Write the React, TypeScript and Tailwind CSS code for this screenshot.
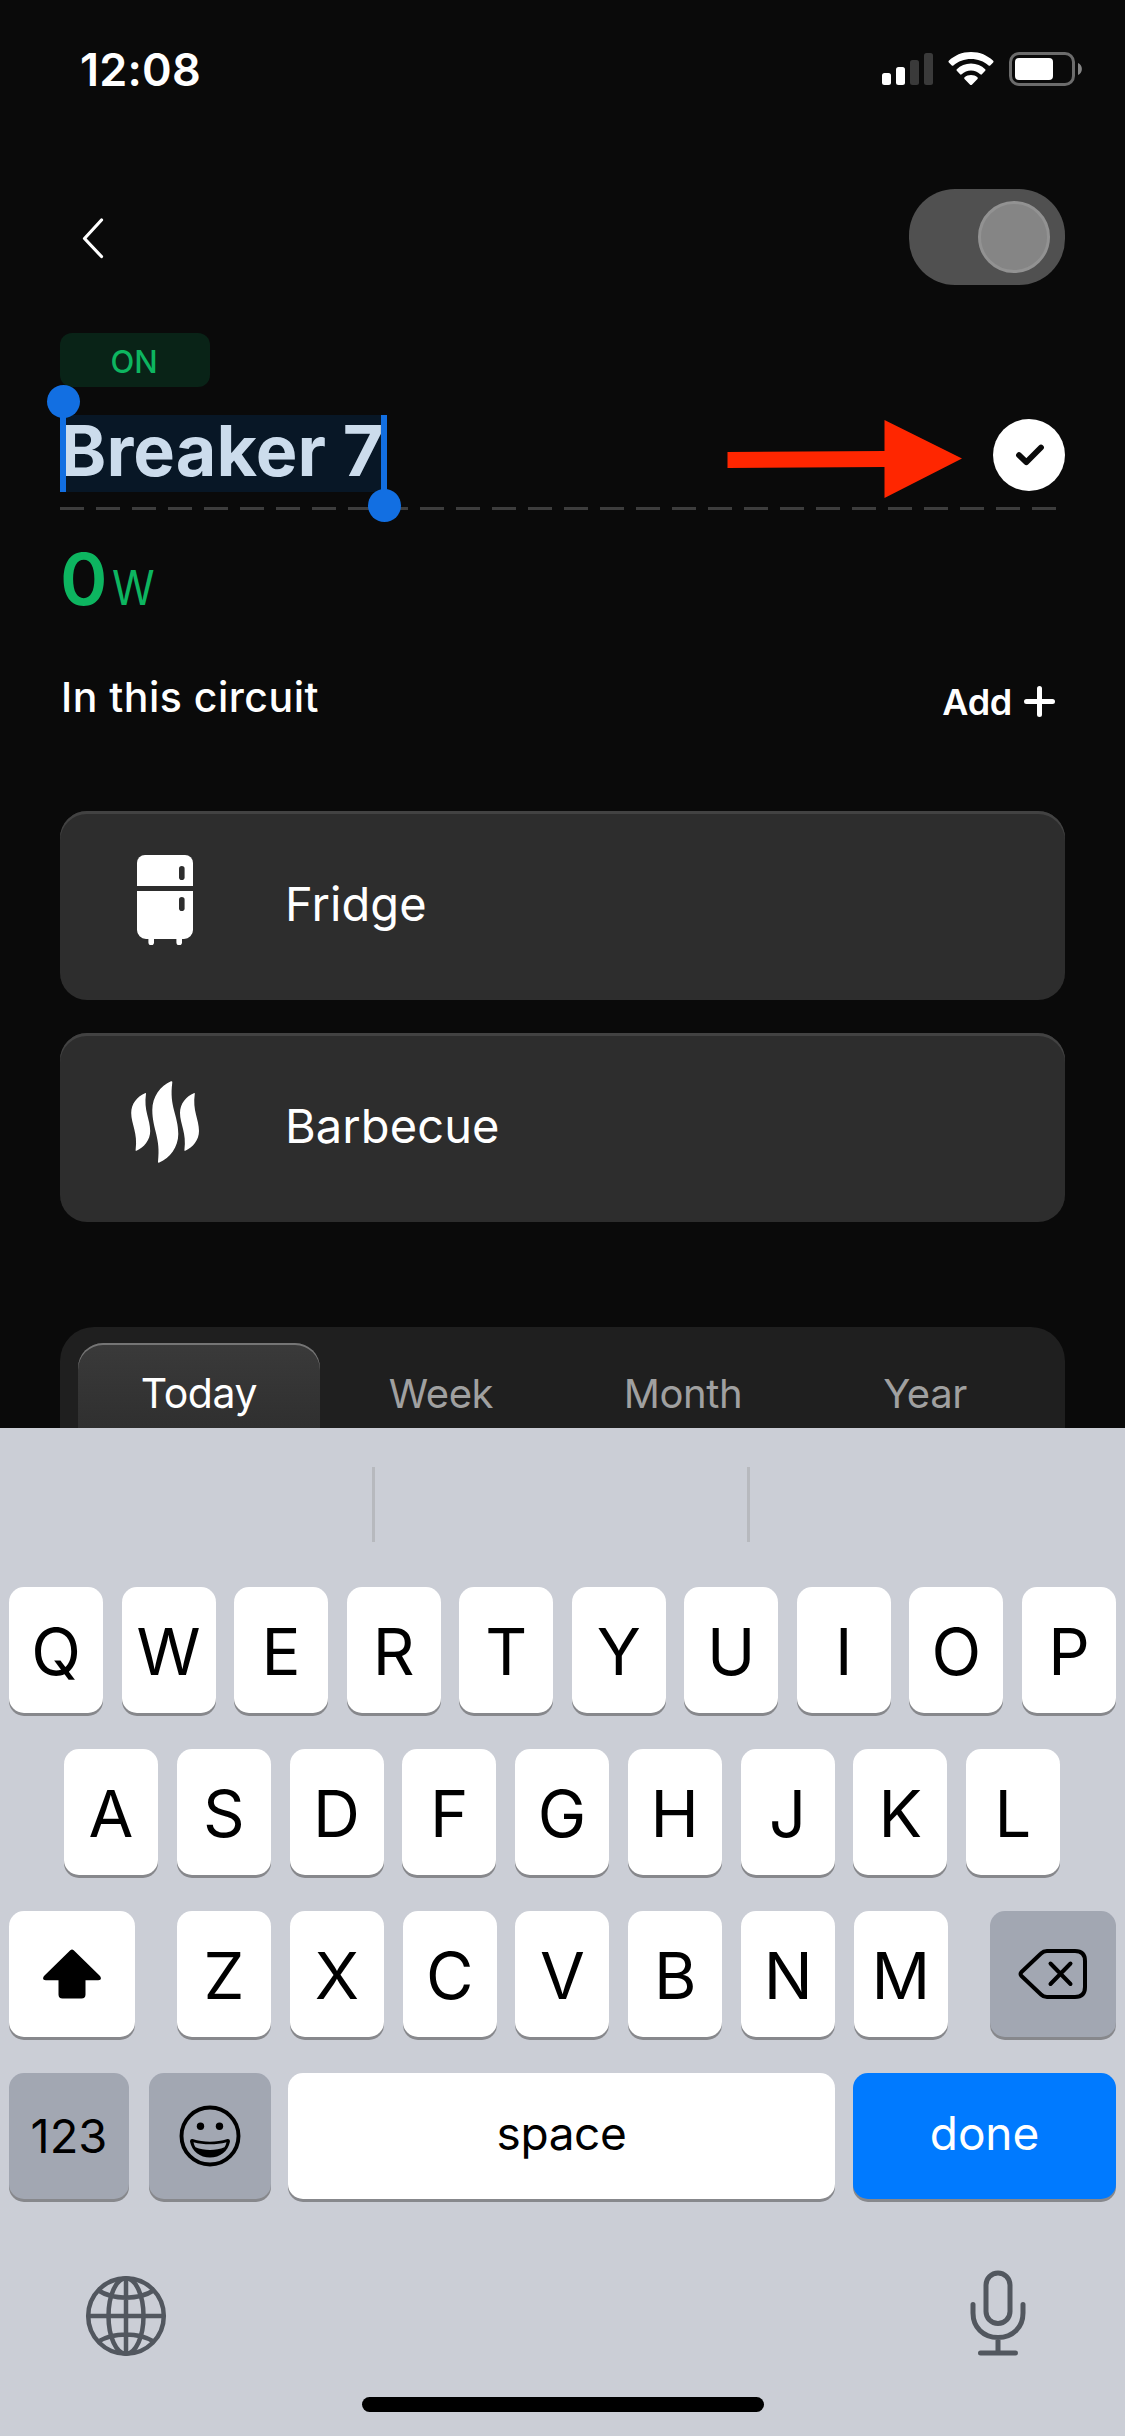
import React from "react";

function SignalIcon() {
  return (
    <svg width="52" height="34" viewBox="0 0 52 34" className="mr-[14px]">
      <rect x="0" y="21" width="9" height="12" rx="2.5" fill="#fff" />
      <rect x="14" y="15" width="9" height="18" rx="2.5" fill="#fff" />
      <rect x="28" y="8" width="9" height="25" rx="2.5" fill="#3a3a3a" />
      <rect x="42" y="1" width="9" height="32" rx="2.5" fill="#3a3a3a" />
    </svg>
  );
}

function WifiIcon() {
  return (
    <svg width="46" height="34" viewBox="0 0 46 34" className="mr-[15px]" fill="#fff">
      <path d="M23 0C32 0 39.6 3.4 45.2 8.8Q46 9.600 45.200 10.400L42.200 13.500Q41.400 14.200 40.600 13.500C35.800 9.300 29.700 7 23 7C16.300 7 10.200 9.300 5.400 13.500Q4.600 14.200 3.800 13.500L.8 10.400Q0 9.600 .8 8.800C6.400 3.400 14 0 23 0Z" />
      <path d="M23 11.500C28.600 11.500 33.500 13.700 37.200 17.200Q38 18 37.200 18.800L33.900 22.300Q33.200 23 32.300 22.300C29.800 20 26.600 18.600 23 18.600C19.400 18.600 16.200 20 13.700 22.300Q12.800 23 12.100 22.300L8.800 18.800Q8 18 8.800 17.200C12.500 13.700 17.400 11.500 23 11.500Z" />
      <path d="M23 23C25.500 23 27.700 23.900 29.400 25.300Q30.300 26.100 29.500 26.900L23.900 32.700Q23 33.500 22.100 32.700L16.500 26.900Q15.700 26.100 16.600 25.300C18.300 23.900 20.500 23 23 23Z" />
    </svg>
  );
}

function BatteryIcon() {
  return (
    <svg width="73" height="34" viewBox="0 0 73 34">
      <rect x="1.500" y="1.500" width="63" height="31" rx="8.500" fill="none" stroke="#6c6c6c" strokeWidth="3" />
      <rect x="6" y="6" width="38" height="22" rx="4" fill="#fff" />
      <path d="M69 11C74.200 13 74.200 21 69 23Z" fill="#858585" />
    </svg>
  );
}

function FridgeIcon() {
  return (
    <svg width="56" height="90" viewBox="0 0 56 90">
      <path d="M8 0H48A8 8 0 0 1 56 8V31H0V8A8 8 0 0 1 8 0Z" fill="#fff" />
      <path d="M0 36H56V75A9 9 0 0 1 47 84H45V87.500A2.800 2.800 0 0 1 39.400 87.500V84H17V87.500A2.800 2.800 0 0 1 11.400 87.500V84H9A9 9 0 0 1 0 75Z" fill="#fff" />
      <rect x="42" y="11" width="5.600" height="14" rx="2.800" fill="#2d2d2d" />
      <rect x="42" y="42" width="5.600" height="14" rx="2.800" fill="#2d2d2d" />
    </svg>
  );
}

function HeatIcon() {
  return (
    <svg width="68" height="82" viewBox="0 0 68 82" fill="#fff">
      <path d="M14.500 12Q15 11.700 15 12.500C12.500 30 19.200 38 19.200 50C19.200 59 13 66.500 5.500 69.700Q4.400 70.200 4.600 69C7 52 .2 43 .2 32C.2 23 6 15.400 14.500 12Z" />
      <path d="M40 .3Q41.500 0 41.300 1.500C38 26 47.300 34 47.300 53C47.300 66 39 77 28.300 81.600Q26.800 82 27 80.500C30 57 21.300 48 21.300 29C21.300 16 29.500 4.500 40 .3Z" />
      <path d="M63.300 12Q63.800 11.700 63.800 12.500C61.300 30 68 38 68 50C68 59 61.800 66.500 54.300 69.700Q53.200 70.200 53.400 69C55.800 52 49 43 49 32C49 23 54.800 15.400 63.300 12Z" />
    </svg>
  );
}

function Appliance({ icon, name }: { icon: React.ReactNode; name: string }) {
  return (
    <div className="flex h-[189px] items-center overflow-hidden rounded-[27px] bg-[#2d2d2d] shadow-[inset_0_3px_0_#424242]">
      <div className="mb-[11px] flex w-[210px] justify-center">{icon}</div>
      <div className="mb-[3px] ml-[15px] text-[47px] leading-[60px] font-normal tracking-[0.1px] text-white">{name}</div>
    </div>
  );
}

function Key({ children, className = "w-[94px] bg-white" }: { children: React.ReactNode; className?: string }) {
  return (
    <div className={"flex h-[126px] shrink-0 items-center justify-center rounded-[15px] shadow-[0_3px_0_#87888c] " + className}>
      {children}
    </div>
  );
}

function Letters({ text }: { text: string }) {
  return (
    <>
      {text.split("").map((c) => (
        <Key key={c}>
          <span className="pt-[3px] text-[65px] leading-none">{c}</span>
        </Key>
      ))}
    </>
  );
}

function Keyboard() {
  return (
    <section className="h-[1008px] bg-[#cbced6] font-normal text-black">
      <div className="flex h-[159px] pt-[39px]">
        <div className="h-[75px] w-[375px] border-r-[3px] border-[#b7b9be]" />
        <div className="h-[75px] w-[375px] border-r-[3px] border-[#b7b9be]" />
      </div>
      <div className="flex flex-col gap-[36px] px-[9px]">
        <div className="flex justify-between">
          <Letters text="QWERTYUIOP" />
        </div>
        <div className="flex justify-between pr-[56px] pl-[55px]">
          <Letters text="ASDFGHJKL" />
        </div>
        <div className="flex justify-between">
          <Key className="w-[126px] bg-white">
            <svg width="58" height="50" viewBox="0 0 58 50">
              <path d="M27.300 1.200Q29 -.4 30.700 1.200L57 27Q58.500 29 57.500 30.500Q57 31.300 55 31.300H42.500V45.500Q42.500 49.500 38.500 49.500H19.500Q15.500 49.500 15.500 45.500V31.300H3Q1 31.300 .5 30.500Q-.5 29 1 27Z" />
            </svg>
          </Key>
          <div className="flex w-[771px] justify-between">
            <Letters text="ZXCVBNM" />
          </div>
          <Key className="w-[126px] bg-[#a2a7b2]">
            <svg width="70" height="52" viewBox="0 0 70 52" fill="none" stroke="#000" strokeWidth="4" strokeLinecap="round" strokeLinejoin="round">
              <path d="M29 3H57Q67 3 67 13V39Q67 49 57 49H29Q25.500 49 23 46.500L3.500 28Q1.500 26 3.500 24L23 5.500Q25.500 3 29 3Z" />
              <path d="M32.500 15.500L52.500 36M52.500 15.500L32.500 36" />
            </svg>
          </Key>
        </div>
        <div className="flex">
          <Key className="w-[120px] bg-[#a2a7b2]">
            <span className="mb-[2px] text-[47px] leading-none">123</span>
          </Key>
          <Key className="ml-[20px] w-[122px] bg-[#a2a7b2]">
            <svg width="62" height="62" viewBox="0 0 62 62">
              <circle cx="31" cy="31" r="28.500" fill="none" stroke="#000" strokeWidth="3.900" />
              <circle cx="21.500" cy="21.300" r="3.700" />
              <circle cx="40.500" cy="21.300" r="3.700" />
              <path d="M13.500 34C25 37.600 37 37.600 48.500 34Q51.200 33.500 51 36.500C49 46.500 41 52.500 31 52.500S13 46.500 11 36.500Q10.800 33.500 13.500 34Z" />
              <path d="M14.500 37.200C25 40 37 40 47.500 37.200C47 39.400 46.300 41 45.500 42.300C37 45.800 25 45.800 16.500 42.300C15.700 41 15 39.400 14.500 37.200Z" fill="#a2a7b2" />
            </svg>
          </Key>
          <Key className="ml-[17px] w-[547px] bg-white">
            <span className="mb-[7px] text-[46px] leading-none tracking-[-0.400px]">space</span>
          </Key>
          <Key className="ml-[18px] w-[263px] bg-[#007aff] text-white">
            <span className="mb-[7px] text-[46px] leading-none tracking-[-0.100px]">done</span>
          </Key>
        </div>
      </div>
      <div className="flex justify-between pt-[70px] pr-[98px] pl-[85px] text-[#52575f]">
        <svg width="82" height="82" viewBox="0 0 82 82" fill="none" stroke="currentColor" strokeWidth="4.500" className="mt-[6px]">
          <circle cx="41" cy="41" r="37.800" />
          <ellipse cx="41" cy="41" rx="17.500" ry="37.800" />
          <path d="M41 3V79M3 41H79M13.500 15.500C28 25 54 25 68.500 15.500M13.500 66.500C28 57 54 57 68.500 66.500" />
        </svg>
        <svg width="58" height="87" viewBox="0 0 58 87" fill="none" stroke="currentColor" strokeWidth="5" strokeLinecap="round" className="mt-[1px]">
          <rect x="17" y="3" width="24" height="50.500" rx="12" />
          <path d="M4 34.500V43C4 57 14 67.500 29 67.500S54 57 54 43V34.500M29 68V83M11.500 83H46.500" />
        </svg>
      </div>
      <div className="mx-auto mt-[40px] h-[15px] w-[402px] rounded-full bg-black" />
    </section>
  );
}

export default function App() {
  return (
    <main className="h-[2436px] w-[1125px] overflow-hidden bg-[#0a0a0a] font-['Inter',sans-serif] whitespace-nowrap text-white">
      <section className="h-[1428px] overflow-hidden">
        <header className="flex h-[138px] items-center justify-between pr-[43px] pl-[80px]">
          <span className="text-[45px] leading-none font-semibold tracking-[0.2px]">12:08</span>
          <div className="flex items-center">
            <SignalIcon />
            <WifiIcon />
            <BatteryIcon />
          </div>
        </header>

        <div className="px-[60px]">
          <div className="mt-[51px] flex h-[96px] items-center justify-between">
            <svg width="24" height="42" viewBox="0 0 24 42" fill="none" stroke="#fff" strokeWidth="3.200" strokeLinecap="round" strokeLinejoin="round" className="mt-[2px] ml-[21px]">
              <path d="M20.500 3L3.500 21.500L20.500 39.500" />
            </svg>
            <div className="flex h-[96px] w-[156px] items-center justify-end rounded-[46px] bg-[#505050] pr-[15px]">
              <div className="size-[72px] rounded-full border-[3px] border-[#929292] bg-[#858585]" />
            </div>
          </div>

          <div className="mt-[48px] flex h-[54px] w-[150px] items-center justify-center rounded-[12px] bg-[#092317] pt-[2px] pr-[2px] text-[31px] leading-none font-medium text-[#0db560]">
            ON
          </div>

          <div className="relative mt-[28px] flex h-[77px] items-center justify-between">
            <div className="relative h-[77px] w-[327px] bg-[#081726]">
              <span className="block text-[70px] leading-[71px] font-bold tracking-[0.1px] text-[#ccdcec]">Breaker 7</span>
              <div className="absolute top-0 left-0 h-full w-[6px] bg-[#126fe2]" />
              <div className="absolute -top-[30px] -left-[13px] size-[33px] rounded-full bg-[#126fe2]" />
              <div className="absolute top-0 right-0 h-full w-[6px] bg-[#126fe2]" />
              <div className="absolute top-[74px] -right-[14px] z-10 size-[33px] rounded-full bg-[#126fe2]" />
            </div>
            <svg width="236" height="80" viewBox="0 0 236 80" className="absolute top-[4px] left-[667px]">
              <path d="M.5 33L157.500 32V1L235 39.500L157.500 79V48L.5 49Z" fill="#ff2600" />
            </svg>
            <div className="mt-[3px] flex size-[72px] items-center justify-center rounded-full bg-white pl-[2px]">
              <svg width="30" height="24" viewBox="0 0 30 24" fill="none" stroke="#0a0a0a" strokeWidth="5.800" strokeLinecap="round" strokeLinejoin="round">
                <path d="M4 12.200L11.300 19.200L26 4.500" />
              </svg>
            </div>
          </div>
          <div className="mt-[15px] h-[3px] w-[996px] bg-[repeating-linear-gradient(to_right,#3d3d3d_0_24px,transparent_24px_36px)]" />

          <div className="h-[137px] text-[72px] leading-[137px] font-semibold text-[#0db560]">
            0<span className="ml-[4px] text-[48px] leading-none font-normal tracking-[-1px]"><span className="inline-block origin-left scale-x-90">W</span></span>
          </div>

          <div className="flex h-[100px] items-center justify-between">
            <h2 className="ml-[1px] text-[41px] leading-none font-medium tracking-[0.5px]">In this circuit</h2>
            <div className="mt-[9px] mr-[9px] flex items-center">
              <span className="text-[36px] leading-none font-semibold tracking-[-0.300px]">Add</span>
              <svg width="33" height="33" viewBox="0 0 33 33" stroke="#fff" strokeWidth="5" strokeLinecap="round" className="ml-[11px]">
                <path d="M16.500 3.500V29.500M3.500 16.500H29.500" />
              </svg>
            </div>
          </div>

          <div className="mt-[64px] flex flex-col gap-[33px]">
            <Appliance icon={<FridgeIcon />} name="Fridge" />
            <Appliance icon={<HeatIcon />} name="Barbecue" />
          </div>

          <nav className="mt-[105px] flex h-[140px] rounded-t-[34px] bg-[#1f1f1f] px-[18px] pt-[16px] text-center text-[40px] leading-[99px] font-normal tracking-[-0.400px] text-[#a0a0a0]">
            <div className="h-[130px] w-[242px] rounded-t-[25px] bg-linear-to-b from-[#3a3a3a] to-[#2a2a2a] pt-[1px] text-[41px] text-white shadow-[inset_0_2px_0_#757575]">Today</div>
            <div className="w-[242px] pt-[1px]">Week</div>
            <div className="w-[242px] pt-[1px]">Month</div>
            <div className="w-[242px] pt-[1px]">Year</div>
          </nav>
        </div>
      </section>
      <Keyboard />
    </main>
  );
}
